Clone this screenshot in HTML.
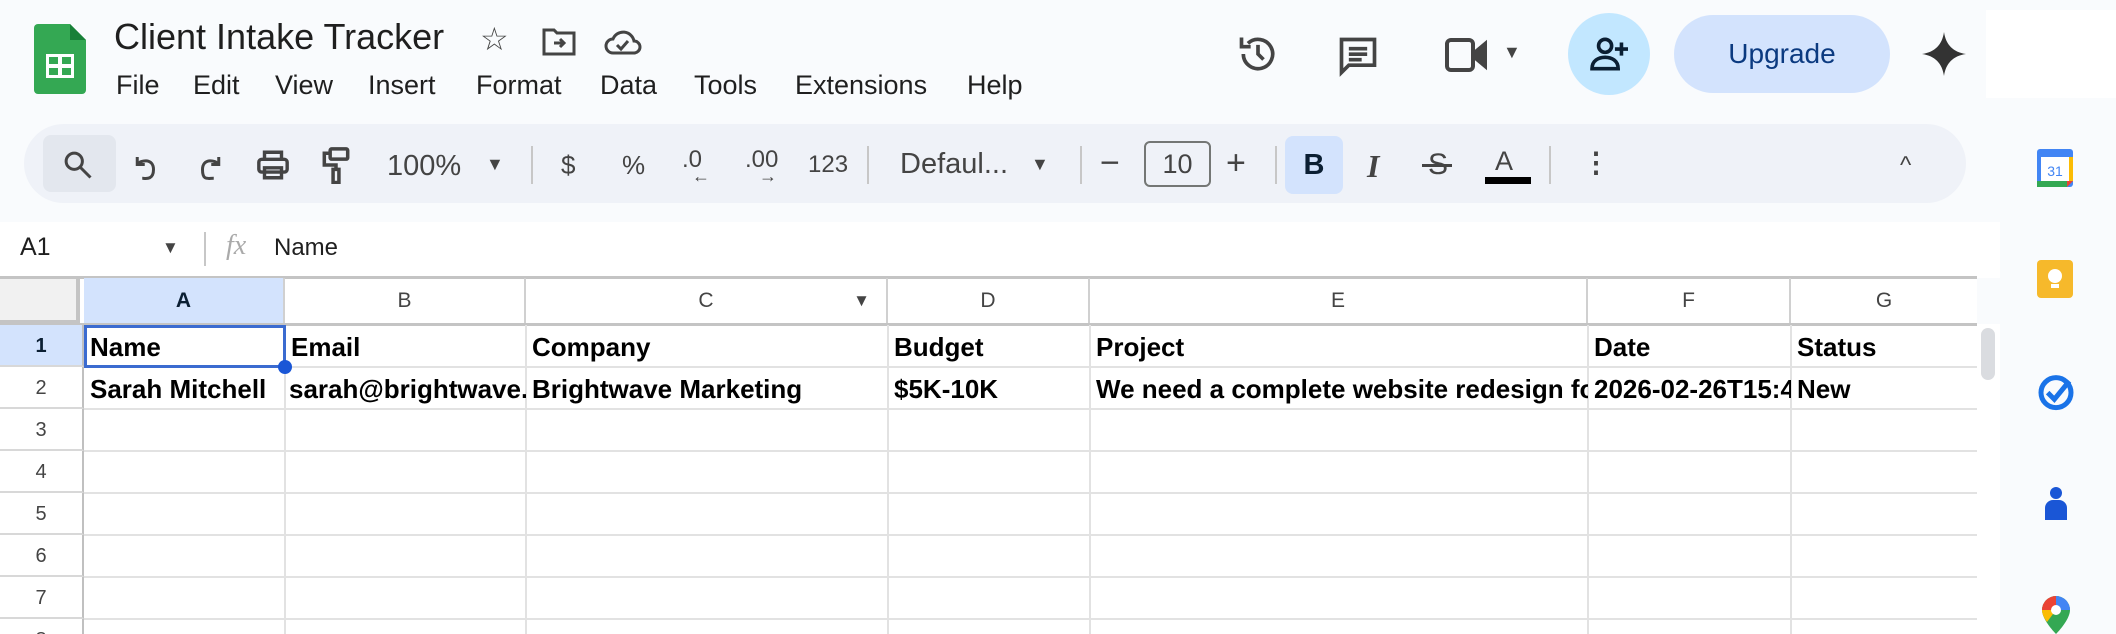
<!DOCTYPE html>
<html><head><meta charset="utf-8"><style>
*{margin:0;padding:0;box-sizing:border-box}
html,body{width:2116px;height:634px;overflow:hidden}
body{background:#f9fbfd;font-family:"Liberation Sans",Arial,sans-serif;position:relative;color:#1f1f1f}
.a{position:absolute}
.t{position:absolute;white-space:nowrap}
.tb{color:#444;font-size:26px}
.sep{position:absolute;width:2px;height:38px;top:146px;background:#c7c7c7}
.ch{position:absolute;top:278px;height:46px;border-right:2px solid #d0d0d0;font-size:21px;color:#444;text-align:center;line-height:46px}
.rh{position:absolute;left:0;width:84px;height:42px;font-size:20px;color:#444;text-align:center;line-height:42px;border-bottom:2px solid #d8d8d8;border-right:2px solid #c0c0c0}
.cell{position:absolute;font-size:26px;font-weight:bold;color:#000;white-space:nowrap;overflow:hidden;line-height:42px;padding-left:6px}
</style></head><body>
<svg class="a" style="left:34px;top:24px" width="52" height="70" viewBox="0 0 52 70"><path d="M4 0h32l16 16v50a4 4 0 0 1-4 4H4a4 4 0 0 1-4-4V4a4 4 0 0 1 4-4z" fill="#34a853"/><path d="M36 0v16h16z" fill="#188038"/><rect x="12" y="30" width="28" height="24" fill="#fff"/><rect x="15" y="33" width="9" height="7" fill="#34a853"/><rect x="28" y="33" width="9" height="7" fill="#34a853"/><rect x="15" y="44" width="9" height="7" fill="#34a853"/><rect x="28" y="44" width="9" height="7" fill="#34a853"/></svg>
<div class="t" style="left:114px;top:16px;font-size:36px">Client Intake Tracker</div>
<div class="t" style="left:480px;top:20px;font-size:32px;color:#444">☆</div>
<svg class="a" style="left:542px;top:26px" width="34" height="30" viewBox="0 0 34 30" fill="none" stroke="#444" stroke-width="3"><path d="M2 4h10l3 3h17v21H2z"/><path d="M12 17h10M18 13l4 4-4 4"/></svg>
<svg class="a" style="left:604px;top:26px" width="38" height="30" viewBox="0 0 38 30" fill="none" stroke="#444" stroke-width="3"><path d="M9 27a7 7 0 0 1 0-14 11 11 0 0 1 21 2 6 6 0 0 1 0 12z"/><path d="M13 19l4 4 7-8"/></svg>
<div class="t" style="top:70px;left:0;font-size:27px;color:#1f1f1f">
<span class="t" style="left:116px">File</span><span class="t" style="left:193px">Edit</span><span class="t" style="left:275px">View</span><span class="t" style="left:368px">Insert</span><span class="t" style="left:476px">Format</span><span class="t" style="left:600px">Data</span><span class="t" style="left:694px">Tools</span><span class="t" style="left:795px">Extensions</span><span class="t" style="left:967px">Help</span></div>
<svg class="a" style="left:1236px;top:32px" width="44" height="44" viewBox="0 0 24 24" fill="none" stroke="#444" stroke-width="2"><path d="M4 12a8 8 0 1 0 2.5-5.8"/><path d="M3 3v5h5"/><path d="M12 7v5l3 3"/></svg>
<svg class="a" style="left:1336px;top:34px" width="44" height="44" viewBox="0 0 24 24"><path d="M3 3h18v14H7l-4 4z" fill="none" stroke="#444" stroke-width="2"/><path d="M7 8h10M7 11h10M7 14h7" stroke="#444" stroke-width="2"/></svg>
<svg class="a" style="left:1443px;top:36px" width="50" height="38" viewBox="0 0 25 19" fill="none" stroke="#444" stroke-width="2"><rect x="2" y="2" width="13" height="15" rx="2"/><path d="M15 9l6-5v11l-6-5" fill="#444"/></svg>
<div class="t" style="left:1503px;top:42px;font-size:18px;color:#444">▼</div>
<div class="a" style="left:1568px;top:13px;width:82px;height:82px;border-radius:50%;background:#c2e7ff"></div>
<svg class="a" style="left:1590px;top:36px" width="40" height="36" viewBox="0 0 24 22" fill="none" stroke="#0b1f33" stroke-width="2.2"><circle cx="9" cy="6" r="4"/><path d="M1 20c0-5 4-7 8-7s8 2 8 7z"/><path d="M19 4v8M15 8h8"/></svg>
<div class="a" style="left:1674px;top:15px;width:216px;height:78px;border-radius:39px;background:#d3e3fd;color:#0b3a80;font-size:28px;text-align:center;line-height:78px">Upgrade</div>
<svg class="a" style="left:1922px;top:32px" width="44" height="44" viewBox="0 0 24 24"><path d="M12 0C13 7 17 11 24 12 17 13 13 17 12 24 11 17 7 13 0 12 7 11 11 7 12 0z" fill="#333"/></svg>
<div class="a" style="left:1986px;top:10px;width:130px;height:88px;background:#fff"></div>
<div class="a" style="left:24px;top:124px;width:1942px;height:79px;border-radius:40px;background:#eff2f8"></div>
<div class="a" style="left:43px;top:135px;width:73px;height:57px;border-radius:8px;background:#e3e7ee"></div>
<svg class="a" style="left:63px;top:150px" width="30" height="30" viewBox="0 0 24 24" fill="none" stroke="#444" stroke-width="2.4"><circle cx="9" cy="9" r="6.5"/><path d="M14 14l8 8"/></svg>
<svg class="a" style="left:131px;top:152px" width="30" height="30" viewBox="0 0 24 24" fill="none" stroke="#444" stroke-width="2.4"><path d="M5 4v6h6"/><path d="M5 10c3-4 13-5 13 4s-7 7-9 7"/></svg>
<svg class="a" style="left:195px;top:152px" width="30" height="30" viewBox="0 0 24 24" fill="none" stroke="#444" stroke-width="2.4"><path d="M19 4v6h-6"/><path d="M19 10c-3-4-13-5-13 4s4 7 9 7"/></svg>
<svg class="a" style="left:256px;top:148px" width="34" height="34" viewBox="0 0 24 24" fill="none" stroke="#444" stroke-width="2.4"><path d="M6 8V3h12v5"/><rect x="2" y="8" width="20" height="9" rx="2"/><path d="M6 14h12v7H6z"/></svg>
<svg class="a" style="left:320px;top:146px" width="32" height="38" viewBox="0 0 20 26" fill="none" stroke="#444" stroke-width="2.4"><rect x="6" y="2" width="12" height="7" rx="1"/><path d="M6 5H2v8h8v3"/><rect x="8" y="16" width="4" height="9"/></svg>
<div class="t tb" style="left:387px;top:150px;font-size:29px">100%</div>
<div class="t" style="left:486px;top:154px;font-size:18px;color:#444">▼</div>
<div class="sep" style="left:531px"></div>
<div class="t tb" style="left:561px;top:150px">$</div>
<div class="t tb" style="left:622px;top:150px">%</div>
<div class="t tb" style="left:682px;top:146px;font-size:24px">.0<span style="position:absolute;left:10px;top:20px;font-size:18px">←</span></div>
<div class="t tb" style="left:745px;top:146px;font-size:24px">.00<span style="position:absolute;left:14px;top:20px;font-size:18px">→</span></div>
<div class="t tb" style="left:808px;top:151px;font-size:24px">123</div>
<div class="sep" style="left:867px"></div>
<div class="t tb" style="left:900px;top:148px;font-size:29px">Defaul...</div>
<div class="t" style="left:1031px;top:154px;font-size:18px;color:#444">▼</div>
<div class="sep" style="left:1080px"></div>
<div class="t tb" style="left:1100px;top:144px;font-size:34px">−</div>
<div class="a" style="left:1144px;top:141px;width:67px;height:46px;border:2px solid #747775;border-radius:6px;font-size:27px;color:#444;text-align:center;line-height:42px">10</div>
<div class="t tb" style="left:1226px;top:144px;font-size:34px">+</div>
<div class="sep" style="left:1275px"></div>
<div class="a" style="left:1285px;top:136px;width:58px;height:58px;border-radius:8px;background:#d3e3fd;color:#0b1f33;font-size:29px;font-weight:bold;text-align:center;line-height:58px">B</div>
<div class="t" style="left:1367px;top:148px;font-size:32px;font-style:italic;font-family:'Liberation Serif',serif;font-weight:bold;color:#444">I</div>
<div class="t tb" style="left:1428px;top:148px;font-size:30px">S<span style="position:absolute;left:-6px;top:16px;width:30px;height:3px;background:#444"></span></div>
<div class="t tb" style="left:1495px;top:146px;font-size:27px">A</div>
<div class="a" style="left:1485px;top:177px;width:46px;height:7px;background:#000"></div>
<div class="sep" style="left:1549px"></div>
<div class="t" style="left:1582px;top:146px;font-size:28px;color:#444;font-weight:bold">⋮</div>
<div class="t" style="left:1900px;top:152px;font-size:24px;color:#444">^</div>
<div class="a" style="left:0;top:222px;width:2000px;height:56px;background:#fff"></div>
<div class="t" style="left:20px;top:233px;font-size:25px">A1</div>
<div class="t" style="left:162px;top:238px;font-size:17px;color:#444">▼</div>
<div class="a" style="left:204px;top:232px;width:2px;height:34px;background:#c7c7c7"></div>
<div class="t" style="left:226px;top:230px;font-size:28px;font-style:italic;font-family:'Liberation Serif',serif;color:#aaa">fx</div>
<div class="t" style="left:274px;top:234px;font-size:24px">Name</div>
<div class="a" style="left:0;top:278px;width:1977px;height:356px;background:#fff"></div>
<div class="a" style="left:0;top:276px;width:1977px;height:3px;background:#c4c4c4"></div>
<div class="a" style="left:0;top:279px;width:80px;height:45px;background:#f1f1f1;border-right:4px solid #c4c4c4;border-bottom:4px solid #c4c4c4"></div>
<div class="ch" style="left:84px;width:201px;background:#d3e3fd;color:#0b1f33;font-weight:bold">A</div>
<div class="ch" style="left:285px;width:241px">B</div>
<div class="ch" style="left:526px;width:362px">C<span style="position:absolute;right:16px;top:0;font-size:17px">▼</span></div>
<div class="ch" style="left:888px;width:202px">D</div>
<div class="ch" style="left:1090px;width:498px">E</div>
<div class="ch" style="left:1588px;width:203px">F</div>
<div class="ch" style="left:1791px;width:186px;border-right:none">G</div>
<div class="a" style="left:0;top:323px;width:1977px;height:3px;background:#c4c4c4"></div>
<div class="rh" style="top:325px;background:#d3e3fd;color:#0b1f33;font-weight:bold">1</div>
<div class="rh" style="top:367px">2</div>
<div class="rh" style="top:409px">3</div>
<div class="rh" style="top:451px">4</div>
<div class="rh" style="top:493px">5</div>
<div class="rh" style="top:535px">6</div>
<div class="rh" style="top:577px">7</div>
<div class="rh" style="top:619px">8</div>
<div class="a" style="left:84px;top:366px;width:1893px;height:2px;background:#e2e2e2"></div>
<div class="a" style="left:84px;top:408px;width:1893px;height:2px;background:#e2e2e2"></div>
<div class="a" style="left:84px;top:450px;width:1893px;height:2px;background:#e2e2e2"></div>
<div class="a" style="left:84px;top:492px;width:1893px;height:2px;background:#e2e2e2"></div>
<div class="a" style="left:84px;top:534px;width:1893px;height:2px;background:#e2e2e2"></div>
<div class="a" style="left:84px;top:576px;width:1893px;height:2px;background:#e2e2e2"></div>
<div class="a" style="left:84px;top:618px;width:1893px;height:2px;background:#e2e2e2"></div>
<div class="a" style="left:284px;top:325px;width:2px;height:309px;background:#e2e2e2"></div>
<div class="a" style="left:525px;top:325px;width:2px;height:309px;background:#e2e2e2"></div>
<div class="a" style="left:887px;top:325px;width:2px;height:309px;background:#e2e2e2"></div>
<div class="a" style="left:1089px;top:325px;width:2px;height:309px;background:#e2e2e2"></div>
<div class="a" style="left:1587px;top:325px;width:2px;height:309px;background:#e2e2e2"></div>
<div class="a" style="left:1790px;top:325px;width:2px;height:309px;background:#e2e2e2"></div>
<div class="cell" style="left:84px;top:326px;width:201px">Name</div>
<div class="cell" style="left:285px;top:326px;width:241px">Email</div>
<div class="cell" style="left:526px;top:326px;width:362px">Company</div>
<div class="cell" style="left:888px;top:326px;width:202px">Budget</div>
<div class="cell" style="left:1090px;top:326px;width:498px">Project</div>
<div class="cell" style="left:1588px;top:326px;width:203px">Date</div>
<div class="cell" style="left:1791px;top:326px;width:186px">Status</div>
<div class="cell" style="left:84px;top:368px;width:201px">Sarah Mitchell</div>
<div class="cell" style="left:285px;top:368px;width:241px;padding-left:4px">sarah@brightwave.com</div>
<div class="cell" style="left:526px;top:368px;width:362px">Brightwave Marketing</div>
<div class="cell" style="left:888px;top:368px;width:202px">$5K-10K</div>
<div class="cell" style="left:1090px;top:368px;width:498px">We need a complete website redesign for</div>
<div class="cell" style="left:1588px;top:368px;width:203px">2026-02-26T15:42</div>
<div class="cell" style="left:1791px;top:368px;width:186px">New</div>
<div class="a" style="left:84px;top:325px;width:202px;height:43px;border:3px solid #3b6bd0"></div>
<div class="a" style="left:278px;top:360px;width:14px;height:14px;border-radius:50%;background:#1a56d6"></div>
<div class="a" style="left:1977px;top:324px;width:23px;height:310px;background:#fff"></div>
<div class="a" style="left:1981px;top:328px;width:14px;height:52px;border-radius:7px;background:#dadce0"></div>
<svg class="a" style="left:2037px;top:149px" width="36" height="38" viewBox="0 0 36 38"><rect x="0" y="0" width="36" height="38" rx="3" fill="#4285f4"/><rect x="4" y="8" width="28" height="24" fill="#fff"/><rect x="0" y="32" width="30" height="6" fill="#34a853"/><rect x="32" y="8" width="4" height="24" fill="#fbbc04"/><path d="M30 38l6-6h-6z" fill="#ea4335"/><text x="18" y="27" font-size="14" font-family="Liberation Sans" fill="#4285f4" text-anchor="middle">31</text></svg>
<svg class="a" style="left:2037px;top:260px" width="36" height="38" viewBox="0 0 36 38"><rect width="36" height="38" rx="4" fill="#f6b92b"/><circle cx="18" cy="16" r="7" fill="#fff"/><rect x="14" y="24" width="8" height="4" fill="#fff"/></svg>
<svg class="a" style="left:2036px;top:370px" width="40" height="42" viewBox="0 0 24 24" fill="none"><circle cx="12" cy="13" r="9" stroke="#1a73e8" stroke-width="3"/><path d="M7 13l4 4 9-11" stroke="#1a73e8" stroke-width="3"/></svg>
<svg class="a" style="left:2043px;top:486px" width="26" height="34" viewBox="0 0 26 34"><circle cx="13" cy="7" r="6" fill="#1a56d6"/><path d="M2 34V22a8 8 0 0 1 8-8h6a8 8 0 0 1 8 8v12z" fill="#1a56d6"/></svg>
<svg class="a" style="left:2041px;top:596px" width="30" height="38" viewBox="0 0 30 38"><path d="M15 0a14 14 0 0 1 14 14c0 10-14 24-14 24S1 24 1 14A14 14 0 0 1 15 0z" fill="#34a853"/><path d="M15 0a14 14 0 0 0-14 14l14 0z" fill="#ea4335"/><path d="M29 14A14 14 0 0 0 15 0v14z" fill="#4285f4"/><path d="M1 14c0 4 2 8 5 12l9-12z" fill="#fbbc04"/><circle cx="15" cy="14" r="5" fill="#fff"/></svg>
</body></html>
